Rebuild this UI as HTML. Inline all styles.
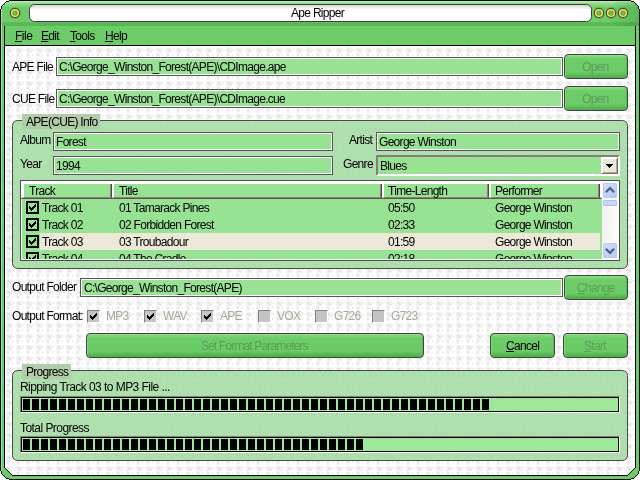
<!DOCTYPE html>
<html><head><meta charset="utf-8"><title>Ape Ripper</title>
<style>
html,body{margin:0;padding:0;width:640px;height:480px;overflow:hidden;background:#fff;}
body{position:relative;font-family:"Liberation Sans",sans-serif;font-size:12px;}
#frame{position:absolute;left:0;top:0;width:640px;height:480px;}
.t{position:absolute;will-change:transform;font-family:"Liberation Sans",sans-serif;font-size:12px;line-height:14px;letter-spacing:-0.7px;white-space:pre;color:#000;}
.t u{text-decoration:underline;text-decoration-thickness:1px;text-underline-offset:1px;}
.dis{color:#5e9c5b;}
.gray{color:#aca899;}
.inp{position:absolute;box-sizing:border-box;border:1px solid #555;background:#98e294;box-shadow:inset 1px 1px 0 #fff, inset -1px -1px 0 #fff;height:19px;}
.btn{position:absolute;box-sizing:border-box;border:1px solid #3a4a3a;border-radius:4px;background:linear-gradient(#96de90 0,#86d882 1px,#74d070 3px,#6ccc68 5px,#6ccc68 17px,#62c05e 19px,#58b254 21px,#54ac50 100%);box-shadow:inset 1px 0 0 #80d87c, inset -1px 0 0 #5cb858;height:25px;}
.grp{position:absolute;box-sizing:border-box;border:1px solid #4a4a4a;border-radius:5px;background-color:#afdcae;}
.leg{position:absolute;background:#b0cca8;height:15px;}
.cb{position:absolute;width:13px;height:13px;box-sizing:border-box;background:#c4c4c4;border:1px solid;border-color:#808080 #fff #fff #808080;}
.lcb{position:absolute;width:13px;height:13px;box-sizing:border-box;background:#98e294;border:2px solid #000;}
.bar{position:absolute;box-sizing:border-box;height:17px;border:1px solid;border-color:#857c70 #fff #fff #857c70;background:#000;}
.bar i{position:absolute;left:1px;top:1px;right:1px;bottom:1px;background:#9ee89a;}
.bar b{position:absolute;left:2px;top:2px;height:11px;background:repeating-linear-gradient(90deg,#000 0,#000 7px,#9ee89a 7px,#9ee89a 9px);}
</style></head><body>
<svg id="frame" width="640" height="480" viewBox="0 0 640 480" shape-rendering="crispEdges">
<defs>
<linearGradient id="tb" gradientUnits="userSpaceOnUse" x1="0" y1="1" x2="0" y2="26">
<stop offset="0" stop-color="#c4f2bc"/><stop offset="0.05" stop-color="#a0e89a"/><stop offset="0.1" stop-color="#8ede88"/><stop offset="0.2" stop-color="#78d472"/><stop offset="0.28" stop-color="#6ccc68"/><stop offset="0.82" stop-color="#6ccc68"/><stop offset="0.88" stop-color="#5ab656"/><stop offset="1" stop-color="#5ab656"/>
</linearGradient>
<linearGradient id="rsh" gradientUnits="userSpaceOnUse" x1="610" y1="0" x2="639" y2="0"><stop offset="0" stop-color="#2a7a28" stop-opacity="0"/><stop offset="1" stop-color="#2a7a28" stop-opacity="0.28"/></linearGradient>
<linearGradient id="pill" x1="0" y1="0" x2="0" y2="1"><stop offset="0" stop-color="#d0d0d0"/><stop offset="0.3" stop-color="#ffffff"/><stop offset="1" stop-color="#ffffff"/></linearGradient>
<pattern id="tex" width="10" height="11" patternUnits="userSpaceOnUse" patternTransform="translate(6,4)">
<rect width="10" height="11" fill="#ffffff"/>
<rect x="0" y="0" width="6" height="5" fill="#f2f2f2"/><rect x="0" y="5" width="4" height="4" fill="#f6f6f6"/><rect x="6" y="1" width="3" height="2" fill="#f4f4f4"/>
<path d="M1 1h2v1h-2zM2 2h2v1h-2zM3 3h2v1h-2z" fill="#e2e2e2"/>
<rect x="1" y="6" width="2" height="2" fill="#e6e6e6"/><rect x="6" y="6" width="1" height="2" fill="#ececec"/><rect x="1" y="9" width="2" height="1" fill="#f0f0f0"/>
</pattern>
<pattern id="gtex" width="11" height="18" patternUnits="userSpaceOnUse" patternTransform="translate(2,16)">
<rect width="11" height="18" fill="#b0dcb0"/>
<path d="M1.5 0.5l3 3M0.5 8.5l4 4M0.5 12.5l3.5 4.5M6.5 5v-1.5h3v1.5M8 10.5h3M6 15.5h2.5v1h2.5M5.5 6.5l2.5 2.5M6.5 11.5l2 2" stroke="#a3eea3" stroke-width="1" fill="none"/>
<rect x="4" y="7" width="1" height="1" fill="#a0d0a4"/>
</pattern>
</defs>
<path d="M9 0h622v1h-622zM9 479h622v1h-622zM6 1h628v1h-628zM6 478h628v1h-628zM5 2h630v1h-630zM5 477h630v1h-630zM4 3h632v1h-632zM4 476h632v1h-632zM3 4h634v1h-634zM3 475h634v1h-634zM2 5h636v1h-636zM2 474h636v1h-636zM1 6h638v1h-638zM1 473h638v1h-638zM1 7h638v1h-638zM1 472h638v1h-638zM1 8h638v1h-638zM1 471h638v1h-638zM0 9h640v462h-640z" fill="#000"/>
<path id="gt" d="M9 1h622v1h-622zM6 2h628v1h-628zM5 3h630v1h-630zM4 4h632v1h-632zM3 5h634v1h-634zM2 6h636v1h-636zM2 7h636v1h-636zM2 8h636v1h-636zM1 9h638v17h-638z" fill="url(#tb)"/>
<clipPath id="gtc"><use href="#gt"/></clipPath>
<path d="M1 26h638v445h-638zM9 478h622v1h-622zM6 477h628v1h-628zM5 476h630v1h-630zM4 475h632v1h-632zM3 474h634v1h-634zM2 473h636v1h-636zM2 472h636v1h-636zM2 471h636v1h-636z" fill="#6ccc68"/>
<rect x="1" y="9" width="1" height="462" fill="#9ee49a"/>
<rect x="610" y="1" width="30" height="25" fill="url(#rsh)" clip-path="url(#gtc)"/>
<polygon points="5,26 635,26 635,468 628,475 12,475 5,468" fill="url(#tex)"/>
<rect x="5" y="26" width="630" height="19" fill="#6ccc68"/>
<polyline points="4.5,26 4.5,467.5 12.5,475.5 627.5,475.5 635.5,467.5 635.5,26" fill="none" stroke="#000" stroke-width="1"/>
<rect x="4" y="45" width="632" height="1" fill="#000"/>
</svg>
<svg style="position:absolute;left:0;top:0" width="640" height="480" viewBox="0 0 640 480">
<rect x="12.5" y="120.5" width="615" height="148" rx="5" fill="url(#gtex)" stroke="#4a4a4a"/>
<rect x="12.5" y="370.5" width="615" height="90" rx="5" fill="url(#gtex)" stroke="#4a4a4a"/>
</svg>
<svg style="position:absolute;left:0;top:0" width="640" height="30" viewBox="0 0 640 30">
<rect x="29.5" y="4.5" width="562" height="17" rx="5" ry="5" fill="url(#pill)" stroke="#403c44" stroke-width="1"/>
<g id="c"><circle cx="15" cy="13" r="6" fill="#4a9a48" opacity="0.5"/><circle cx="15" cy="13" r="5" fill="#403850"/><circle cx="15" cy="13" r="4.1" fill="#fbe840"/><circle cx="15" cy="13" r="2.6" fill="#7a7850"/><circle cx="15" cy="13" r="1.9" fill="#50d048"/></g>
<use href="#c" x="584" y="0"/><use href="#c" x="596" y="0"/><use href="#c" x="608" y="0"/>
</svg>
<div class="t" style="left:291px;top:6px">Ape Ripper</div>
<div class="t" style="left:15px;top:29px;letter-spacing:-0.5px"><u>F</u>ile</div>
<div class="t" style="left:41px;top:29px"><u>E</u>dit</div>
<div class="t" style="left:70px;top:29px"><u>T</u>ools</div>
<div class="t" style="left:105px;top:29px"><u>H</u>elp</div>

<div class="t" style="left:12px;top:60px">APE File</div>
<div class="inp" style="left:56px;top:57px;width:507px"></div>
<div class="t" style="left:59px;top:60px">C:\George_Winston_Forest(APE)\CDImage.ape</div>
<div class="btn" style="left:564px;top:54px;width:64px"></div>
<div class="t dis" style="left:582px;top:60px">Open</div>

<div class="t" style="left:12px;top:92px">CUE File</div>
<div class="inp" style="left:56px;top:89px;width:507px"></div>
<div class="t" style="left:59px;top:92px">C:\George_Winston_Forest(APE)\CDImage.cue</div>
<div class="btn" style="left:564px;top:86px;width:64px"></div>
<div class="t dis" style="left:582px;top:92px">Open</div>

<div class="leg" style="left:22px;top:114px;width:78px"></div>
<div class="t" style="left:26px;top:115px">APE(CUE) Info</div>
<div class="t" style="left:20px;top:133px">Album</div>
<div class="inp" style="left:53px;top:132px;width:280px"></div>
<div class="t" style="left:56px;top:135px">Forest</div>
<div class="t" style="left:349px;top:133px">Artist</div>
<div class="inp" style="left:376px;top:132px;width:244px"></div>
<div class="t" style="left:379px;top:135px">George Winston</div>
<div class="t" style="left:20px;top:157px">Year</div>
<div class="inp" style="left:53px;top:156px;width:280px"></div>
<div class="t" style="left:56px;top:159px">1994</div>
<div class="t" style="left:343px;top:157px">Genre</div>
<div style="position:absolute;left:376px;top:155px;width:244px;height:21px;box-sizing:border-box;border:2px solid;border-color:#877d76 #fff #fff #877d76;background:#98e294"></div>
<div style="position:absolute;left:601px;top:157px;width:17px;height:17px;box-sizing:border-box;background:#ece9d8;border:1px solid;border-color:#fff #716f64 #716f64 #fff;box-shadow:inset 1px 1px 0 #fff, inset -1px -1px 0 #aca899"></div>
<svg style="position:absolute;left:605px;top:164px" width="9" height="5" viewBox="0 0 9 5" shape-rendering="crispEdges"><path d="M1 0h7v1h-7zM2 1h5v1h-5zM3 2h3v1h-3zM4 3h1v1h-1z" fill="#000"/></svg>
<div class="t" style="left:380px;top:159px">Blues</div>

<!-- listview -->
<div style="position:absolute;left:20px;top:180px;width:600px;height:81px;box-sizing:border-box;border:1px solid #4c4c4c;background:#98e294;overflow:hidden;box-shadow:inset 0 0 0 1px #fff" id="lv">
<div style="position:absolute;left:0;top:0;width:581px;height:16px;background:#fff"></div>
<div style="position:absolute;left:3px;top:3px;width:87px;height:13px;background:#98e294;border-right:1px solid #504844;border-bottom:1px solid #8c8078;box-shadow:inset -1px 0 0 #8c8078"></div>
<div style="position:absolute;left:93px;top:3px;width:267px;height:13px;background:#98e294;border-right:1px solid #504844;border-bottom:1px solid #8c8078;box-shadow:inset -1px 0 0 #8c8078"></div>
<div style="position:absolute;left:363px;top:3px;width:104px;height:13px;background:#98e294;border-right:1px solid #504844;border-bottom:1px solid #8c8078;box-shadow:inset -1px 0 0 #8c8078"></div>
<div style="position:absolute;left:470px;top:3px;width:108px;height:13px;background:#98e294;border-right:1px solid #504844;border-bottom:1px solid #8c8078;box-shadow:inset -1px 0 0 #8c8078"></div>
<div style="position:absolute;left:0;top:17px;width:580px;height:1px;background:#5c5450"></div>
<div style="position:absolute;left:19px;top:52px;width:560px;height:17px;background:#ece9d8"></div>
<!-- scrollbar -->
<div style="position:absolute;left:581px;top:1px;width:16px;height:77px;background:linear-gradient(90deg,#f2f1ec,#fdfdfb)"></div>
</div>
<div class="t" style="left:29px;top:184px">Track</div>
<div class="t" style="left:119px;top:184px">Title</div>
<div class="t" style="left:388px;top:184px">Time-Length</div>
<div class="t" style="left:495px;top:184px">Performer</div>

<!-- list rows -->
<div id="rows" style="position:absolute;left:21px;top:198px;width:580px;height:61px;overflow:hidden">
<div class="lcb" style="left:5px;top:3px"></div><div class="lcb" style="left:5px;top:20px"></div><div class="lcb" style="left:5px;top:37px"></div><div class="lcb" style="left:5px;top:54px"></div>
<svg style="position:absolute;left:5px;top:3px" width="13" height="64" viewBox="0 0 13 64" shape-rendering="crispEdges"><g id="ck" fill="#000"><path d="M3 5h1v3h-1zM4 6h1v3h-1zM5 7h1v3h-1zM6 6h1v3h-1zM7 5h1v3h-1zM8 4h1v3h-1zM9 3h1v3h-1z"/></g><use href="#ck" y="17"/><use href="#ck" y="34"/><use href="#ck" y="51"/></svg>
<div class="t" style="left:21px;top:3px">Track 01</div><div class="t" style="left:98px;top:3px">01 Tamarack Pines</div><div class="t" style="left:367px;top:3px">05:50</div><div class="t" style="left:474px;top:3px">George Winston</div>
<div class="t" style="left:21px;top:20px">Track 02</div><div class="t" style="left:98px;top:20px">02 Forbidden Forest</div><div class="t" style="left:367px;top:20px">02:33</div><div class="t" style="left:474px;top:20px">George Winston</div>
<div class="t" style="left:21px;top:37px">Track 03</div><div class="t" style="left:98px;top:37px">03 Troubadour</div><div class="t" style="left:367px;top:37px">01:59</div><div class="t" style="left:474px;top:37px">George Winston</div>
<div class="t" style="left:21px;top:54px">Track 04</div><div class="t" style="left:98px;top:54px">04 The Cradle</div><div class="t" style="left:367px;top:54px">02:18</div><div class="t" style="left:474px;top:54px">George Winston</div>
</div>
<!-- scrollbar buttons -->
<svg style="position:absolute;left:602px;top:182px" width="16" height="77" viewBox="0 0 16 77">
<defs><linearGradient id="sb" x1="0" y1="0" x2="1" y2="1"><stop offset="0" stop-color="#d6e2fc"/><stop offset="1" stop-color="#b4c8f4"/></linearGradient></defs>
<rect x="0.5" y="0.5" width="15" height="16" rx="2.5" fill="url(#sb)" stroke="#fff"/>
<rect x="1.5" y="1.5" width="13" height="14" rx="1.5" fill="none" stroke="#b8c8f0" stroke-width="1"/>
<path d="M3.8 10.3L8 6.1L12.2 10.3" fill="none" stroke="#4d6185" stroke-width="2.2"/>
<rect x="0.5" y="17.5" width="15" height="7" rx="2" fill="#c8d6fb" stroke="#fff"/>
<rect x="1.5" y="18.5" width="13" height="5" rx="1" fill="none" stroke="#a8bcf0"/>
<rect x="0.5" y="60.5" width="15" height="16" rx="2.5" fill="url(#sb)" stroke="#fff"/>
<rect x="1.5" y="61.5" width="13" height="14" rx="1.5" fill="none" stroke="#b8c8f0" stroke-width="1"/>
<path d="M3.8 66.7L8 70.9L12.2 66.7" fill="none" stroke="#4d6185" stroke-width="2.2"/>
</svg>

<div class="t" style="left:12px;top:280px">Output Folder</div>
<div class="inp" style="left:80px;top:278px;width:483px"></div>
<div class="t" style="left:84px;top:281px">C:\George_Winston_Forest(APE)</div>
<div class="btn" style="left:564px;top:275px;width:64px"></div>
<div class="t dis" style="left:577px;top:281px"><u>C</u>hange</div>

<div class="t" style="left:12px;top:309px">Output Format:</div>
<div class="cb" style="left:87px;top:310px"></div><div class="cb" style="left:144px;top:310px"></div><div class="cb" style="left:201px;top:310px"></div><div class="cb" style="left:258px;top:310px"></div><div class="cb" style="left:315px;top:310px"></div><div class="cb" style="left:372px;top:310px"></div>
<svg style="position:absolute;left:87px;top:310px" width="130" height="13" viewBox="0 0 130 13" shape-rendering="crispEdges"><use href="#ck"/><use href="#ck" x="57"/><use href="#ck" x="114"/></svg>
<div class="t gray" style="left:106px;top:309px">MP3</div><div class="t gray" style="left:163px;top:309px">WAV</div><div class="t gray" style="left:220px;top:309px">APE</div><div class="t gray" style="left:277px;top:309px">VOX</div><div class="t gray" style="left:334px;top:309px">G726</div><div class="t gray" style="left:391px;top:309px">G723</div>

<div class="btn" style="left:86px;top:333px;width:338px"></div>
<div class="t dis" style="left:201px;top:339px;letter-spacing:-0.85px">Set Format Parameters</div>
<div class="btn" style="left:490px;top:333px;width:65px"></div>
<div class="t" style="left:506px;top:339px"><u>C</u>ancel</div>
<div class="btn" style="left:563px;top:333px;width:65px"></div>
<div class="t dis" style="left:584px;top:339px"><u>S</u>tart</div>

<div class="leg" style="left:22px;top:364px;width:49px"></div>
<div class="t" style="left:26px;top:365px">Progress</div>
<div class="t" style="left:20px;top:380px;letter-spacing:-0.55px">Ripping Track 03 to MP3 File ...</div>
<div class="bar" style="left:20px;top:396px;width:600px"><i></i><b style="width:466px"></b></div>
<div class="t" style="left:20px;top:421px;letter-spacing:-0.55px">Total Progress</div>
<div class="bar" style="left:20px;top:436px;width:600px"><i></i><b style="width:340px"></b></div>
</body></html>
